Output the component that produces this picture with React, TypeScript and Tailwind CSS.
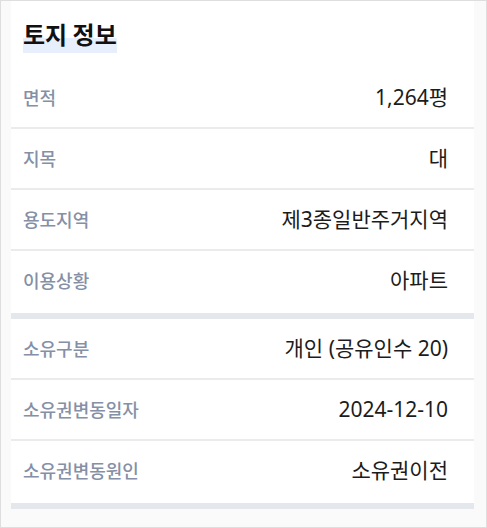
import React from "react";

type Row = { label: string; value: string };

const landRows: Row[] = [
  { label: "면적", value: "1,264평" },
  { label: "지목", value: "대" },
  { label: "용도지역", value: "제3종일반주거지역" },
  { label: "이용상황", value: "아파트" },
];

const ownerRows: Row[] = [
  { label: "소유구분", value: "개인 (공유인수 20)" },
  { label: "소유권변동일자", value: "2024-12-10" },
  { label: "소유권변동원인", value: "소유권이전" },
];

const InfoRow = ({ row, last }: { row: Row; last: boolean }) => {
  return (
    <div
      className={
        last
          ? "flex h-[62px] items-center justify-between pb-[3px] pl-3 pr-[26px]"
          : "flex h-[61px] items-center justify-between border-b-2 border-[#ebebeb] pl-3 pr-[26px]"
      }
    >
      <span className="text-[18px] font-medium text-[#8590a6]">{row.label}</span>
      <span className="text-[21px] text-[#1c1c1c] [font-family:'Noto_Sans','Noto_Sans_CJK_KR',sans-serif]">
        {row.value}
      </span>
    </div>
  );
};

const App = () => {
  return (
    <div className="h-[528px] w-[487px] border border-[#dedede] bg-[#fafafa] pl-[10px] [font-family:'Noto_Sans_CJK_KR','Noto_Sans',sans-serif]">
      <div className="w-[463px] bg-white">
        {/* 제목 */}
        <div className="pl-3 pt-[18px] pb-[15px]">
          <span className="inline-block bg-[linear-gradient(to_bottom,transparent_55%,#e7eefc_55%)] pb-1 text-[24px] font-bold leading-[30px] text-[#111]">
            토지 정보
          </span>
        </div>

        {landRows.map((row, i) => (
          <InfoRow key={row.label} row={row} last={i === landRows.length - 1} />
        ))}
        <div className="h-[6px] bg-[#e4e7eb]" />

        {ownerRows.map((row, i) => (
          <InfoRow key={row.label} row={row} last={i === ownerRows.length - 1} />
        ))}
        <div className="h-[6px] bg-[#e4e7eb]" />
      </div>
    </div>
  );
};

export default App;
